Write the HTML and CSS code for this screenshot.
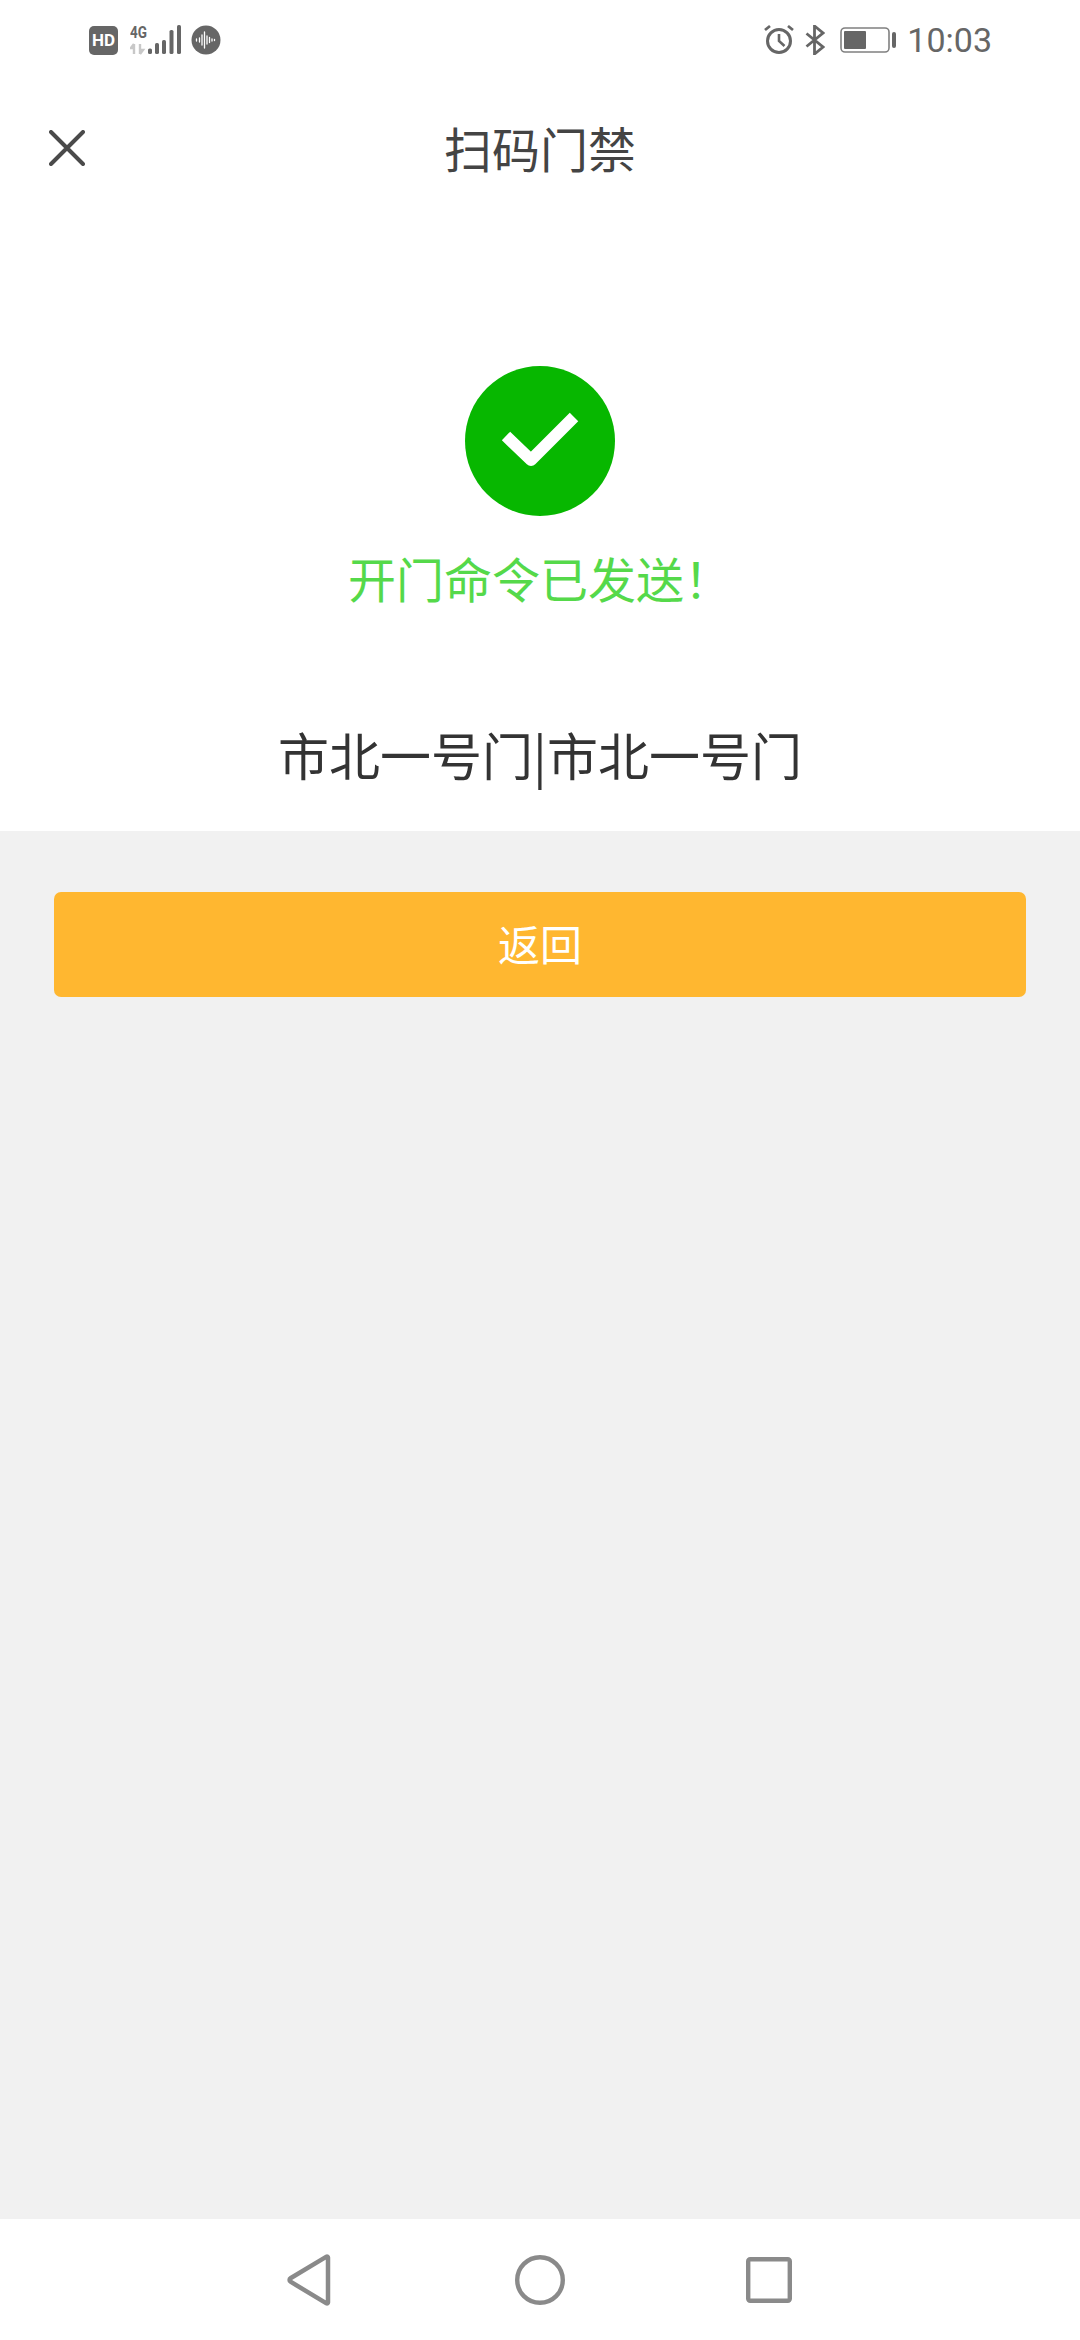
FILE: index.html
```html
<!DOCTYPE html>
<html lang="zh">
<head>
<meta charset="utf-8">
<title>扫码门禁</title>
<link rel="stylesheet" href="styles.css">
</head>
<body>
<div class="page">
  <div class="white-top">
    <div class="statusbar">
      <div class="status-left">
        <span class="hd">HD</span>
        <svg class="ic-signal" width="52" height="30" viewBox="0 0 52 30">
          <text x="0" y="13" class="g-text" textLength="17" lengthAdjust="spacingAndGlyphs">4G</text>
          <path d="M4 19v10M4 19l-3 4h3M10 19v10M10 29l3-4h-3" stroke="#c8c8c8" stroke-width="2.4" fill="none"/>
          <rect x="18" y="23.5" width="4" height="5.5" rx="1.6" fill="#666"/>
          <rect x="25" y="18" width="4" height="11" rx="1.6" fill="#666"/>
          <rect x="32" y="15" width="4" height="14" rx="1.6" fill="#666"/>
          <rect x="39.5" y="5" width="4" height="24" rx="1.6" fill="#666"/>
          <rect x="47" y="0" width="4" height="29" rx="1.6" fill="#666"/>
        </svg>
        <svg class="ic-voice" width="30" height="30" viewBox="0 0 30 30"><circle cx="15" cy="15" r="14.5" fill="#666"/><path d="M5.500 14v2M8.500 13v4M11 10v10M13.500 7v16M16 11v8M18.500 12.500v5M21 14v2M23.500 14.500v1" stroke="#fff" stroke-width="1.300" stroke-linecap="round"/></svg>
      </div>
      <div class="status-right">
        <svg class="ic-alarm" width="32" height="32" viewBox="0 0 32 32"><circle cx="16" cy="17" r="11.500" fill="none" stroke="#666" stroke-width="3"/><path d="M16 10v7l5.500 5" fill="none" stroke="#666" stroke-width="2.600"/><path d="M2 6l5-4M30 6l-5-4" stroke="#666" stroke-width="2.800"/></svg>
        <svg class="ic-bt" width="20" height="30" viewBox="0 0 20 30"><path d="M1.500 8.500L18 22l-8.500 7V1L18 8 1.500 21.500" fill="none" stroke="#666" stroke-width="2.800"/></svg>
        <svg class="ic-batt" width="56" height="26" viewBox="0 0 56 26"><rect x="1" y="1" width="48" height="24" rx="4" fill="none" stroke="#808080" stroke-width="1.600"/><rect x="4" y="4" width="22" height="18" rx="1" fill="#666"/><rect x="52" y="5" width="4" height="16" rx="2" fill="#666"/></svg>
        <span class="time">10:03</span>
      </div>
    </div>
    <header class="titlebar">
      <svg class="close" width="36" height="36" viewBox="0 0 36 36"><path d="M2 2l32 32M34 2L2 34" stroke="#4a4a4a" stroke-width="4" stroke-linecap="round"/></svg>
      <h1 class="title">扫码门禁</h1>
    </header>
    <section class="result">
      <svg class="ok" width="150" height="150" viewBox="0 0 150 150"><circle cx="75" cy="75" r="75" fill="#07b700"/><path d="M41 70l25 24 43-43" fill="none" stroke="#fff" stroke-width="12" stroke-linejoin="round"/></svg>
      <p class="msg">开门命令已发送！</p>
      <p class="door">市北一号门|市北一号门</p>
    </section>
  </div>
  <main class="content">
    <button class="back-btn">返回</button>
  </main>
  <nav class="navbar">
    <svg class="nav-back" width="44" height="52" viewBox="0 0 44 52"><path d="M41 3.500a1 1 0 0 0-1.500-.9L3.500 24.300a2 2 0 0 0 0 3.400l36 21.700a1 1 0 0 0 1.500-.9z" fill="none" stroke="#8a8a8a" stroke-width="4.500" stroke-linejoin="round"/></svg>
    <svg class="nav-home" width="50" height="50" viewBox="0 0 50 50"><circle cx="25" cy="25" r="22.800" fill="none" stroke="#8a8a8a" stroke-width="4.400"/></svg>
    <svg class="nav-recent" width="46" height="46" viewBox="0 0 46 46"><rect x="2.200" y="2.200" width="41.600" height="41.600" rx="2" fill="none" stroke="#8a8a8a" stroke-width="4.400"/></svg>
  </nav>
</div>
</body>
</html>
```
FILE: styles.css
```css
* { box-sizing: border-box; }
html, body { margin: 0; padding: 0; }
body {
  width: 1080px;
  height: 2340px;
  font-family: "Noto Sans CJK SC", "Noto Sans", sans-serif;
  background: #f1f1f1;
}
.page { display: flex; flex-direction: column; height: 2340px; }
.white-top { background: #fff; }
.statusbar {
  height: 80px;
  display: flex;
  justify-content: space-between;
  align-items: center;
  padding: 0 88px 0 89px;
}
.status-left, .status-right { display: flex; align-items: center; }
.status-left svg, .status-right svg { display: block; flex: none; }
.hd {
  width: 29px;
  height: 29px;
  border-radius: 5px;
  background: #666;
  color: #fff;
  font-family: Roboto, sans-serif;
  font-weight: 700;
  font-size: 17px;
  line-height: 29px;
  text-align: center;
}
.ic-signal { margin-left: 12px; }
.ic-voice { margin-left: 9px; }
.ic-bt { margin-left: 10px; }
.ic-batt { margin-left: 15px; }
.time {
  margin-left: 11px;
  font-family: Roboto, sans-serif;
  font-size: 34px;
  line-height: 40px;
  color: #666;
}
.g-text { font-family: Roboto, sans-serif; font-weight: 700; font-size: 17px; fill: #666; }
.titlebar {
  position: relative;
  height: 140px;
  display: flex;
  align-items: center;
  justify-content: center;
  padding-bottom: 6px;
}
.close { position: absolute; left: 49px; top: 50px; }
.title { margin: 0; font-size: 48px; font-weight: 400; line-height: 60px; color: #444; }
.result {
  display: flex;
  flex-direction: column;
  align-items: center;
  padding: 146px 0 47px;
}
.ok { display: block; }
.msg { margin: 31px 0 0; font-size: 48px; line-height: 60px; color: #55d94a; }
.door { margin: 117px 0 0; font-size: 51px; line-height: 60px; color: #333; }
.content { flex: 1; padding: 61px 54px 0; }
.back-btn {
  display: block;
  width: 100%;
  height: 105px;
  border: 0;
  border-radius: 7px;
  background: #ffb730;
  color: #fff;
  font-family: inherit;
  font-size: 42px;
  line-height: 60px;
  padding: 0 0 4px;
}
.navbar {
  height: 121px;
  background: #fff;
  display: flex;
  align-items: center;
  justify-content: center;
  padding: 1px 1px 0 0;
}
.navbar svg { display: block; flex: none; }
.nav-back { margin-right: 184px; }
.nav-recent { margin-left: 181px; }
```
